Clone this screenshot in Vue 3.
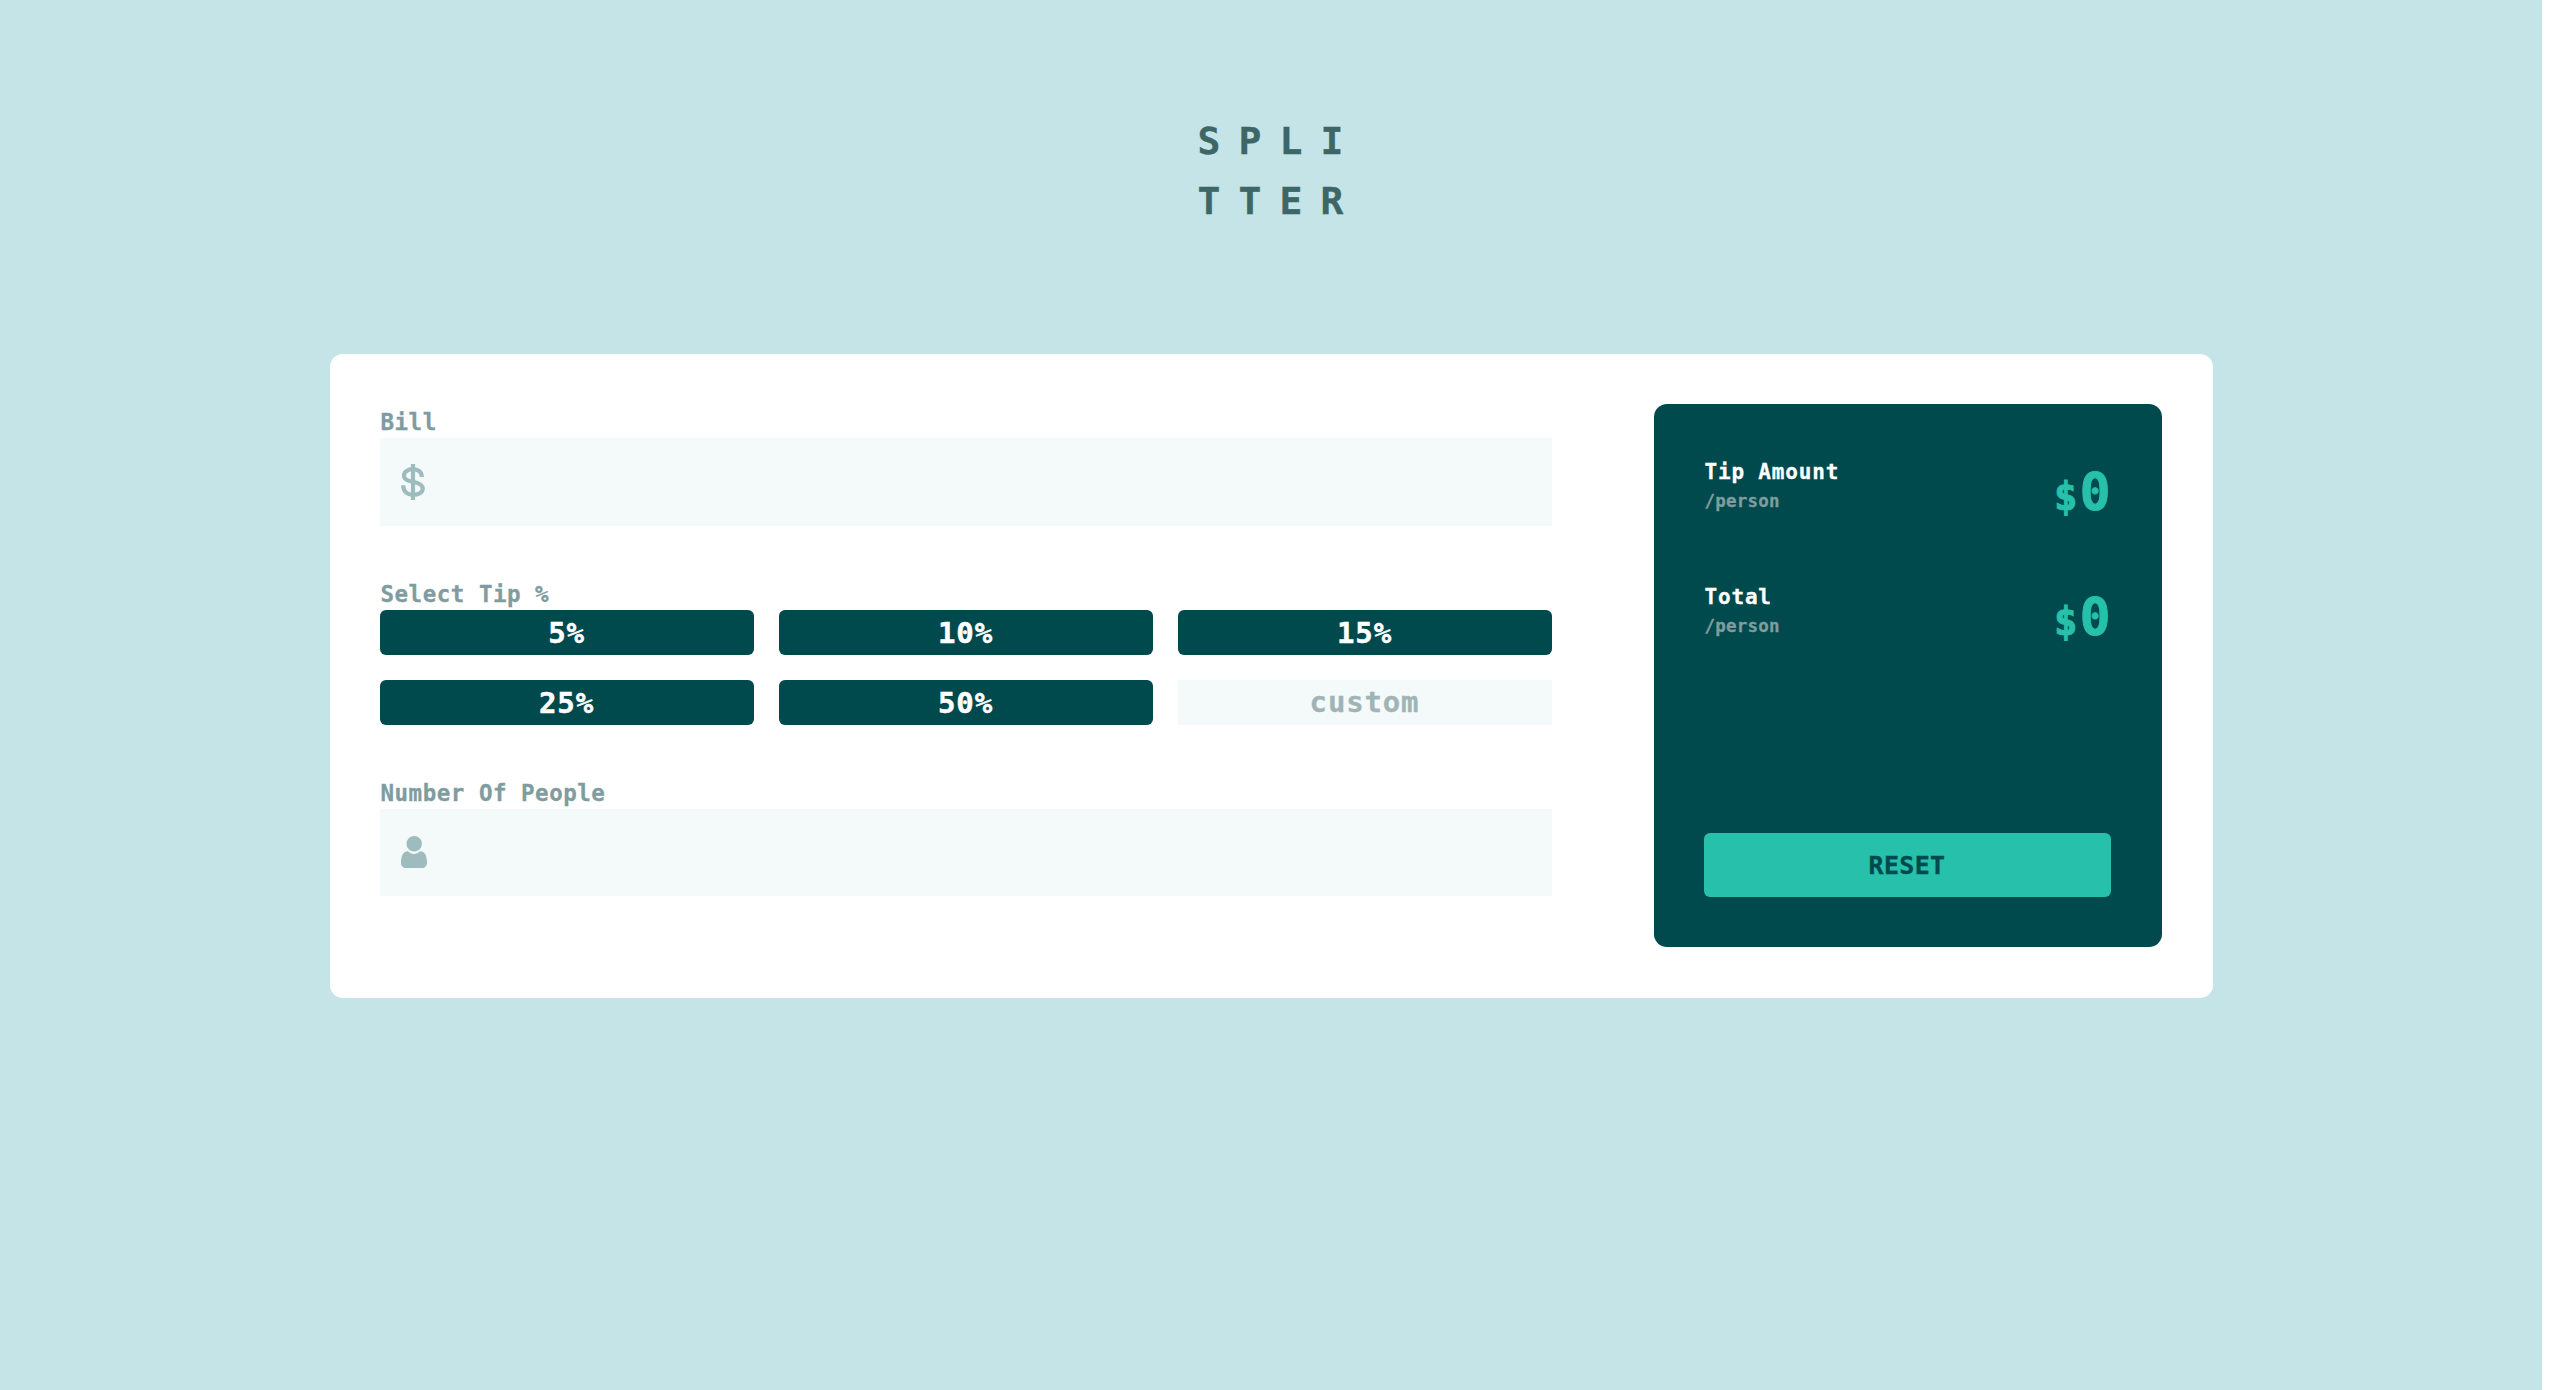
<script setup>
import { ref } from 'vue'

const tips = [5, 10, 15, 25, 50]
const tip = ref(0)
const bill = ref('')
const people = ref('')
const custom = ref('')
const results = ['Tip Amount', 'Total']

function reset() {
  tip.value = 0
  bill.value = ''
  people.value = ''
  custom.value = ''
}
</script>

<template>
  <div class="page">
    <h1 class="logo"><span>SPLI</span><span>TTER</span></h1>
    <main class="card">
      <section class="form">
        <div class="group">
          <label class="label" for="bill">Bill</label>
          <div class="field">
            <svg class="dollar" width="24" height="36" viewBox="0 0 24 36">
              <path d="M20.8 13C20.8 8 17 5.2 12 5.2S3 7.8 3 11.500C3 15.500 6.500 16.600 12 17.800S21.700 20.500 21.700 24.500C21.700 28.600 17.500 30.700 12 30.700C6 30.700 2.200 27.500 2.200 21.200" />
              <path d="M12 0V36" />
            </svg>
            <input id="bill" v-model="bill" class="entry" />
          </div>
        </div>
        <div class="group">
          <span class="label">Select Tip %</span>
          <div class="tips">
            <button v-for="t in tips" :key="t" class="tip" @click="tip = t">{{ t }}%</button>
            <input v-model="custom" class="custom" placeholder="custom" />
          </div>
        </div>
        <div class="group">
          <label class="label" for="people">Number Of People</label>
          <div class="field">
            <svg class="person" width="26" height="32" viewBox="0 0 26 32">
              <circle cx="13.200" cy="7.700" r="7.700" />
              <path d="M6.500 15.300C8 15.300 8.500 18 13 18S18 15.300 19.500 15.300C24 15.300 26 20.500 26 26.500C26 30 24 32 21 32H5C2 32 0 30 0 26.500C0 20.500 2 15.300 6.500 15.300Z" />
            </svg>
            <input id="people" v-model="people" class="entry" />
          </div>
        </div>
      </section>
      <aside class="panel">
        <div v-for="r in results" :key="r" class="result">
          <div class="caption">
            <div class="name">{{ r }}</div>
            <div class="per">/person</div>
          </div>
          <div class="amount"><span class="sign">$</span><span class="value">0</span></div>
        </div>
        <button class="reset" @click="reset">RESET</button>
      </aside>
    </main>
  </div>
</template>

<style>
body {
  margin: 0;
  background: #fff;
}
</style>

<style scoped>
.page {
  box-sizing: border-box;
  width: 2542px;
  min-height: 1390px;
  padding-top: 112px;
  display: flex;
  flex-direction: column;
  align-items: center;
  background: #c5e4e7;
  font-family: "DejaVu Sans Mono", monospace;
  font-weight: 700;
  -webkit-text-stroke: 0.300px;
}
button,
input {
  font: inherit;
  border: 0;
  padding: 0;
  margin: 0;
  min-width: 0;
  outline: 0;
}
.logo {
  margin: 0 0 123px;
  display: flex;
  flex-direction: column;
  padding-left: 17px;
  font-size: 38px;
  line-height: 59.500px;
  letter-spacing: 18.100px;
  color: #3d6666;
}
.card {
  box-sizing: border-box;
  width: 1883px;
  height: 644px;
  padding: 50px 51px 51px 50px;
  display: flex;
  justify-content: space-between;
  background: #fff;
  border-radius: 13px;
}
.form {
  width: 1172px;
  display: flex;
  flex-direction: column;
  gap: 50px;
}
.group {
  display: flex;
  flex-direction: column;
}
.label {
  height: 34px;
  line-height: 36px;
  padding-left: 1px;
  font-size: 22.500px;
  letter-spacing: 0.510px;
  color: #7f9c9f;
}
.field {
  box-sizing: border-box;
  height: 87.500px;
  padding-left: 21px;
  display: flex;
  align-items: center;
  gap: 20px;
  background: #f4fafa;
}
.entry {
  flex: 1;
  height: 100%;
  background: transparent;
}
.dollar {
  fill: none;
  stroke: #9ebbbd;
  stroke-width: 4.200;
}
.person {
  fill: #9ebbbd;
  margin-top: -1px;
}
.tips {
  display: grid;
  grid-template-columns: repeat(3, 374px);
  grid-auto-rows: 45px;
  gap: 25px;
}
.tip {
  padding-top: 1px;
  background: #00494d;
  color: #fff;
  border-radius: 6px;
  font-size: 29px;
  letter-spacing: 0.840px;
  -webkit-text-stroke: 0.500px;
}
.custom {
  background: #f4fafa;
  text-align: center;
  font-size: 29px;
  letter-spacing: 0.840px;
}
.custom::placeholder {
  color: #a0b4b6;
  opacity: 1;
}
.panel {
  box-sizing: border-box;
  width: 508px;
  height: 543px;
  padding: 50px 51px 50px 50px;
  display: flex;
  flex-direction: column;
  background: #00494d;
  border-radius: 13px;
}
.result {
  height: 125px;
  display: flex;
  justify-content: space-between;
}
.caption {
  padding-left: 1px;
}
.name {
  height: 33px;
  line-height: 37px;
  font-size: 21px;
  letter-spacing: 0.820px;
  color: #fff;
}
.per {
  line-height: 28px;
  font-size: 17.500px;
  letter-spacing: 0.220px;
  color: #7f9c9f;
}
.amount {
  display: flex;
  align-items: baseline;
  line-height: 78px;
  color: #26c0ab;
  -webkit-text-stroke: 1px;
}
.sign {
  font-size: 39px;
  letter-spacing: 2.400px;
}
.value {
  font-size: 51px;
}
.reset {
  height: 64px;
  margin-top: auto;
  border-radius: 6px;
  background: #26c0ab;
  color: #00494d;
  font-size: 25px;
  letter-spacing: 0.350px;
}
</style>
